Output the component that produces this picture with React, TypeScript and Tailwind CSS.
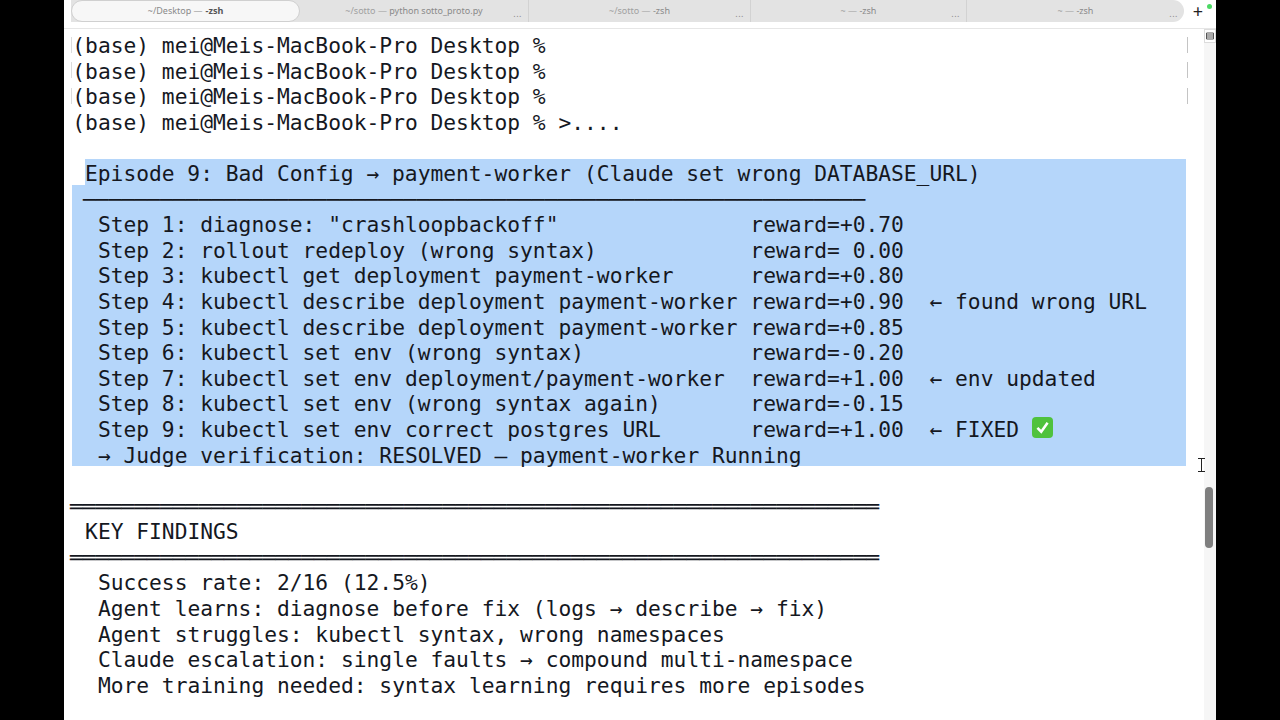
const step = (left: string, reward = '', note = '') =>
  ('  ' + left).padEnd(53) + (note ? reward.padEnd(14) + note : reward)

const dbl = '═'.repeat(63)

const topLines = [
  '(base) mei@Meis-MacBook-Pro Desktop %',
  '(base) mei@Meis-MacBook-Pro Desktop %',
  '(base) mei@Meis-MacBook-Pro Desktop %',
  '(base) mei@Meis-MacBook-Pro Desktop % >....',
  ' ',
]

const selected = [
  step('Step 1: diagnose: "crashloopbackoff"', 'reward=+0.70'),
  step('Step 2: rollout redeploy (wrong syntax)', 'reward= 0.00'),
  step('Step 3: kubectl get deployment payment-worker', 'reward=+0.80'),
  step('Step 4: kubectl describe deployment payment-worker', 'reward=+0.90', '← found wrong URL'),
  step('Step 5: kubectl describe deployment payment-worker', 'reward=+0.85'),
  step('Step 6: kubectl set env (wrong syntax)', 'reward=-0.20'),
  step('Step 7: kubectl set env deployment/payment-worker', 'reward=+1.00', '← env updated'),
  step('Step 8: kubectl set env (wrong syntax again)', 'reward=-0.15'),
]

const findings = [
  '  Success rate: 2/16 (12.5%)',
  '  Agent learns: diagnose before fix (logs → describe → fix)',
  '  Agent struggles: kubectl syntax, wrong namespaces',
  '  Claude escalation: single faults → compound multi-namespace',
  '  More training needed: syntax learning requires more episodes',
]

const tabs = [
  { path: '~/sotto', cmd: 'python sotto_proto.py', w: 'w-[229px]' },
  { path: '~/sotto', cmd: '-zsh', w: 'w-[222px]' },
  { path: '~', cmd: '-zsh', w: 'w-[216px]' },
  { path: '~', cmd: '-zsh', w: 'w-[217px]' },
]

function Tab({ path, cmd, w, last }: { path: string; cmd: string; w: string; last: boolean }) {
  return (
    <div className={`relative flex h-full items-center justify-center text-[9px] text-[#a0a0a0] ${w} ${last ? '' : 'border-r border-[#d2d2d2]'}`}>
      <span>
        {path} — <span className="text-[#8a8a8a]">{cmd}</span>
      </span>
      <span className="absolute right-[6px] top-[7px] text-[9px] tracking-[0.5px] text-[#8c8c8c]">...</span>
    </div>
  )
}

function TabBar() {
  return (
    <div className="flex h-[29px] border-b border-[#e6e6e6] bg-white pl-[7px]">
      <div className="flex h-[22px] w-[1113px] rounded-r-[11px] bg-[#e3e3e3]">
        <div className="flex h-full w-[229px] items-center justify-center rounded-full border border-[#d0d0d0] bg-[#f7f7f7] text-[9px] text-[#8a8a8a]">
          ~/Desktop — <span className="ml-[3px] font-bold text-[#555]">-zsh</span>
        </div>
        {tabs.map((t, i) => (
          <Tab key={i} {...t} last={i === tabs.length - 1} />
        ))}
      </div>
      <div className="ml-[8px] flex h-[22px] w-[12px] items-center justify-center text-[18px] leading-none text-[#222]">+</div>
    </div>
  )
}

function Line({ text }: { text: string }) {
  return <div className="h-[25.6px] whitespace-pre pl-[8.3px] leading-[29px]">{text}</div>
}

function DoubleRule() {
  return <div className="h-[25.6px] whitespace-pre pl-[6px] leading-[29px] tracking-[0.05px]">{dbl}</div>
}

function Selection() {
  return (
    <div className="w-[1122px]">
      <div className="ml-[21px] h-[25.6px] whitespace-pre bg-[#b5d6fa] leading-[29px]">
        Episode 9: Bad Config → payment-worker (Claude set wrong DATABASE_URL)
      </div>
      <div className="ml-[8px] bg-[#b5d6fa]">
        <div className="h-[25.6px] whitespace-pre pl-[11px] leading-[29px] tracking-[0.03px]">{'─'.repeat(61)}</div>
        {selected.map((s, i) => (
          <div key={i} className="h-[25.6px] whitespace-pre pl-[0.3px] leading-[29px]">{s}</div>
        ))}
        <div className="flex h-[25.6px] whitespace-pre pl-[0.3px] leading-[29px]">
          {step('Step 9: kubectl set env correct postgres URL', 'reward=+1.00', '← FIXED ')}
          <span className="mt-[2px] flex h-[21px] w-[21px] items-center justify-center rounded-[4px] bg-[#4fc23d]">
            <svg viewBox="0 0 20 20" className="h-[17px] w-[17px]">
              <path d="M4 10.5 L8.5 15 L16 4.5" fill="none" stroke="#fff" strokeWidth="3" />
            </svg>
          </span>
        </div>
        <div className="h-[25.6px] whitespace-pre pl-[0.3px] leading-[29px]">
          {'  → Judge verification: RESOLVED — payment-worker Running'}
        </div>
      </div>
    </div>
  )
}

function Scrollbar() {
  return (
    <div className="w-[12px] shrink-0 bg-[#f6f6f6]">
      <div className="flex h-[14px] items-center justify-center border border-[#dcdcdc] bg-white text-[#555]">
        <svg viewBox="0 0 8 8" className="h-[8px] w-[8px]">
          <path d="M0.5 1 H7.5 V7 H0.5 Z M0.5 3 H7.5 M0.5 5 H7.5" fill="none" stroke="#555" strokeWidth="1" />
        </svg>
      </div>
    </div>
  )
}

export default function App() {
  return (
    <div className="flex h-[720px] w-[1280px] overflow-hidden bg-black">
      <div className="relative ml-[64px] flex h-full w-[1152px] flex-col bg-white">
        <TabBar />
        <div className="flex min-h-0 flex-1">
          <div className="w-[1140px] pt-[2px] font-['DejaVu_Sans_Mono','Liberation_Mono',monospace] text-[21.26px] text-[#15181f]">
            {topLines.map((s, i) => <Line key={i} text={s} />)}
            <Selection />
            <Line text=" " />
            <DoubleRule />
            <Line text=" KEY FINDINGS" />
            <DoubleRule />
            {findings.map((s, i) => <Line key={i} text={s} />)}
          </div>
          <Scrollbar />
        </div>
        {/* mark brackets next to earlier prompts */}
        {[37, 62, 88].map(y => (
          <div key={y} className="absolute left-[1123px] h-[16px] w-px bg-[#c4c4c4]" style={{ top: y }} />
        ))}
        {[37, 62, 88].map(y => (
          <div key={y} className="absolute left-[7px] h-[16px] w-px bg-[#dcdcdc]" style={{ top: y }} />
        ))}
        {/* mouse cursor */}
        <div className="absolute left-[1134px] top-[458px] h-[14px] w-[7px] border-y border-[#222]">
          <div className="mx-auto h-full w-px bg-[#222]" />
        </div>
        {/* scrollbar thumb */}
        <div className="absolute left-[1141px] top-[487px] h-[61px] w-[8px] rounded-full bg-[#7f7f7f]" />
        {/* green window dot */}
        <div className="absolute left-[1143px] top-[4px] h-[5px] w-[5px] rounded-full bg-[#4cd964]" />
      </div>
    </div>
  )
}
